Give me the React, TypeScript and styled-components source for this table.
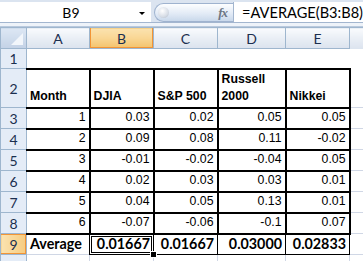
import React from "react";
import styled, { createGlobalStyle, css } from "styled-components";

const GlobalStyle = createGlobalStyle`
  html, body {
    margin: 0;
    padding: 0;
    background: #ffffff;
    overflow: hidden;
  }
`;

const Window = styled.div`
  width: 363px;
  height: 261px;
  overflow: hidden;
  background: #ffffff;
  font-family: "Liberation Sans", Arial, sans-serif;
`;

const FormulaBar = styled.div`
  display: flex;
  align-items: stretch;
  height: 20px;
  padding-top: 2px;
  background: #dbe4f0;
  border-bottom: 1px solid #a3b6cf;
`;

const NameBox = styled.div`
  display: flex;
  align-items: center;
  width: 157px;
  background: #ffffff;
  font: 14px Lato, "Liberation Sans", sans-serif;
  color: #000;
`;

const NameText = styled.span`
  flex: 1;
  text-align: center;
  padding-left: 3px;
`;

const DropArrow = styled.span`
  width: 0;
  height: 0;
  margin: 2px 6px 0 0;
  border-left: 3px solid transparent;
  border-right: 3px solid transparent;
  border-top: 3px solid #000;
`;

const Expander = styled.div`
  display: flex;
  align-items: center;
  justify-content: space-between;
  width: 82px;
  margin: 1px 0 0 3px;
  padding: 0 6px 0 3px;
  box-sizing: border-box;
  border: 1px solid #9fb3cf;
  border-right: none;
  border-radius: 10px 0 0 10px;
  background: linear-gradient(#fdfeff, #e3ebf6 55%, #c9d8eb);
`;

const Knob = styled.span`
  width: 11px;
  height: 11px;
  border-radius: 50%;
  background: radial-gradient(circle at 40% 35%, #ffffff, #d7dde6 60%, #aab4c2);
`;

const Fx = styled.span`
  font: italic 700 13px "Liberation Serif", serif;
  color: #6d7684;
  letter-spacing: -1px;
`;

const FormulaInput = styled.div`
  flex: 1;
  display: flex;
  align-items: center;
  padding-left: 8px;
  background: #ffffff;
  border-left: 1px solid #a3b6cf;
  font: 14.6px Lato, "Liberation Sans", sans-serif;
  color: #000;
  white-space: nowrap;
`;

const Gap = styled.div`
  height: 3px;
  background: #eef3f9;
  border-bottom: 1px solid #b9c9dd;
`;

const Grid = styled.table`
  border-collapse: collapse;
  table-layout: fixed;
  width: 413px;
`;

const Col = styled.col<{ $w: number }>`
  width: ${(p) => p.$w}px;
`;

const Row = styled.tr<{ $h: number }>`
  height: ${(p) => p.$h}px;
`;

const headFont = css`
  font: 14px Lato, "Liberation Sans", sans-serif;
  color: #1b2f4f;
  font-weight: 400;
  padding: 0;
  text-align: center;
`;

const Corner = styled.th`
  position: relative;
  padding: 0;
  background: linear-gradient(#dde7f4, #c3d2e6);
  border: 1px solid #9eb6ce;
`;

const CornerMark = styled.span`
  position: absolute;
  right: 3px;
  bottom: 3px;
  width: 0;
  height: 0;
  border-left: 12px solid transparent;
  border-bottom: 12px solid #f2f6fb;
`;

const ColHead = styled.th<{ $active?: boolean }>`
  ${headFont};
  background: linear-gradient(#f9fbfd, #e9eef5 50%, #dbe3ee);
  border: 1px solid #9eb6ce;
  ${(p) =>
    p.$active &&
    css`
      background: linear-gradient(#fbe3b0, #f9d693 50%, #f4c26a);
      box-shadow: inset 1px 0 #f29536, inset -1px 0 #f29536, inset 0 -1px #f29536;
    `}
`;

const RowHead = styled.th<{ $active?: boolean }>`
  ${headFont};
  background: #e4ecf7;
  border: 1px solid #9eb6ce;
  ${(p) =>
    p.$active &&
    css`
      background: linear-gradient(90deg, #fbe3b0, #f6cb7f);
      box-shadow: inset 0 1px #f29536, inset 0 -1px #f29536, inset -1px 0 #f29536;
    `}
`;

type Frame = "grid" | "thick" | "thin" | "none" | "hidden";

const Cell = styled.td<{
  $frame?: Frame;
  $right?: boolean;
  $bold?: boolean;
  $calibri?: boolean;
  $noLeft?: boolean;
  $wrap?: boolean;
}>`
  position: relative;
  padding: 0 3px 4px 3px;
  vertical-align: bottom;
  white-space: nowrap;
  overflow: visible;
  font: 12.3px/14px "Liberation Sans", Arial, sans-serif;
  color: #000;
  text-align: ${(p) => (p.$right ? "right" : "left")};
  border: 1px solid #d0d7e5;
  ${(p) => p.$frame === "thick" && css`border: 2px solid #000;`}
  ${(p) => p.$frame === "thin" && css`border: 1px solid #000;`}
  ${(p) => p.$frame === "none" && css`border-style: none;`}
  ${(p) => p.$frame === "hidden" && css`border-style: hidden;`}
  ${(p) => p.$noLeft && css`border-left-style: none;`}
  ${(p) => p.$bold && css`font-weight: 700;`}
  ${(p) =>
    p.$calibri &&
    css`
      font: 700 14.3px/16px Lato, "Liberation Sans", sans-serif;
      padding-bottom: 2px;
    `}
  ${(p) =>
    p.$wrap &&
    css`
      white-space: normal;
      line-height: 17px;
      padding-bottom: 2px;
    `}
`;

const Selection = styled.span`
  position: absolute;
  left: -1px;
  top: -1px;
  right: -1px;
  bottom: -1px;
  border: 3px double #000;
  pointer-events: none;
`;

const FillHandle = styled.span`
  position: absolute;
  right: -4px;
  bottom: -4px;
  width: 5px;
  height: 5px;
  background: #000;
  border: 1px solid #fff;
`;

const CellText = styled.span`
  position: relative;
`;

const columns = ["A", "B", "C", "D", "E", ""];
const widths = [26, 63, 64, 64, 68, 64, 64];

const data: [number, string, string, string, string][] = [
  [1, "0.03", "0.02", "0.05", "0.05"],
  [2, "0.09", "0.08", "0.11", "-0.02"],
  [3, "-0.01", "-0.02", "-0.04", "0.05"],
  [4, "0.02", "0.03", "0.03", "0.01"],
  [5, "0.04", "0.05", "0.13", "0.01"],
  [6, "-0.07", "-0.06", "-0.1", "0.07"],
];

const averages = ["0.01667", "0.01667", "0.03000", "0.02833"];

export default function App() {
  return (
    <Window>
      <GlobalStyle />
      <FormulaBar>
        <NameBox>
          <NameText>B9</NameText>
          <DropArrow />
        </NameBox>
        <Expander>
          <Knob />
          <Fx>fx</Fx>
        </Expander>
        <FormulaInput>=AVERAGE(B3:B8)</FormulaInput>
      </FormulaBar>
      <Gap />
      <Grid>
        <colgroup>
          {widths.map((w, i) => (
            <Col key={i} $w={w} />
          ))}
        </colgroup>
        <tbody>
          <Row $h={21}>
            <Corner>
              <CornerMark />
            </Corner>
            {columns.map((c, i) => (
              <ColHead key={i} $active={c === "B"}>
                {c}
              </ColHead>
            ))}
            <ColHead />
          </Row>
          <Row $h={20}>
            <RowHead>1</RowHead>
            {[0, 1, 2, 3, 4].map((i) => (
              <Cell key={i} $frame="none" />
            ))}
            <Cell $frame="hidden" />
            <Cell $frame="hidden" />
          </Row>
          <Row $h={39}>
            <RowHead>2</RowHead>
            <Cell $frame="thick" $noLeft $bold>
              Month
            </Cell>
            <Cell $frame="thick" $bold>
              DJIA
            </Cell>
            <Cell $frame="thick" $bold>
              S&amp;P 500
            </Cell>
            <Cell $frame="thick" $bold $wrap>
              Russell 2000
            </Cell>
            <Cell $frame="thick" $bold>
              Nikkei
            </Cell>
            <Cell />
            <Cell />
          </Row>
          {data.map((r) => (
            <Row $h={21} key={r[0]}>
              <RowHead>{r[0] + 2}</RowHead>
              <Cell $frame="thick" $noLeft $right>
                {r[0]}
              </Cell>
              {r.slice(1).map((v, i) => (
                <Cell key={i} $frame="thick" $right>
                  {v}
                </Cell>
              ))}
              <Cell />
              <Cell />
            </Row>
          ))}
          <Row $h={21}>
            <RowHead $active>9</RowHead>
            <Cell $frame="none" $calibri>
              Average
            </Cell>
            {averages.map((v, i) => (
              <Cell key={i} $frame="thin" $calibri $right>
                <CellText>{v}</CellText>
                {i === 0 && (
                  <>
                    <Selection />
                    <FillHandle />
                  </>
                )}
              </Cell>
            ))}
            <Cell />
            <Cell />
          </Row>
          <Row $h={21}>
            <RowHead>10</RowHead>
            {[0, 1, 2, 3, 4, 5].map((i) => (
              <Cell key={i} />
            ))}
          </Row>
        </tbody>
      </Grid>
    </Window>
  );
}
